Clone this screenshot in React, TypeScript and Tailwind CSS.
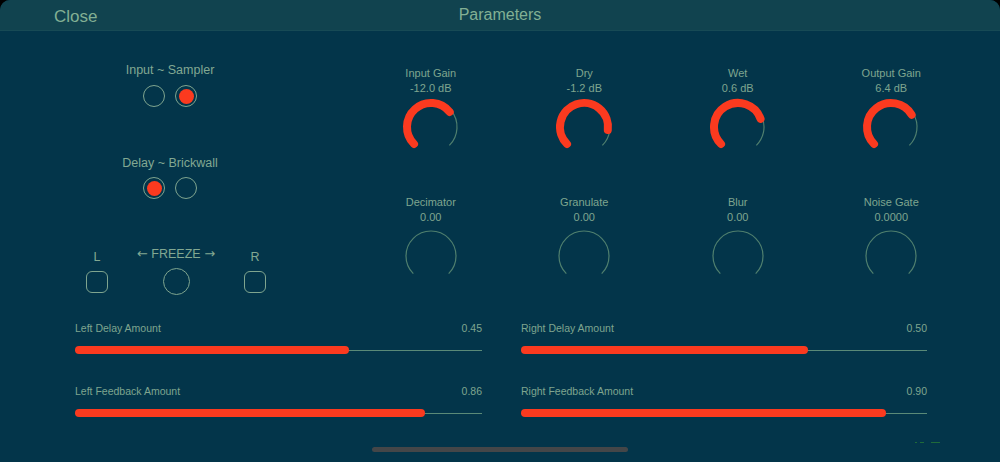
const RED = "#fb3a1f";

function arcPath(cx: number, cy: number, r: number, from: number, to: number) {
  const rad = (d: number) => (d * Math.PI) / 180;
  const x1 = cx + r * Math.sin(rad(from));
  const y1 = cy - r * Math.cos(rad(from));
  const x2 = cx + r * Math.sin(rad(to));
  const y2 = cy - r * Math.cos(rad(to));
  const large = to - from > 180 ? 1 : 0;
  return `M ${x1} ${y1} A ${r} ${r} 0 ${large} 1 ${x2} ${y2}`;
}

function Knob({ label, value, amount }: { label: string; value: string; amount?: number }) {
  const end = amount !== undefined ? -135 + 270 * amount : -135;
  return (
    <div className="flex flex-col items-center">
      <div className="text-[11px] leading-[13px] text-[#7fa58f]">{label}</div>
      <div className="mt-[2px] text-[11px] leading-[13px] text-[#7fa58f]">{value}</div>
      <svg width="60" height="60" viewBox="0 0 60 60" className="mt-[2px]">
        {amount !== undefined ? (
          <>
            <path d={arcPath(30, 30, 26, end, 135)} fill="none" stroke="#4f7f6e" strokeWidth="1.2" />
            <path d={arcPath(30, 30, 24, -135, end)} fill="none" stroke={RED} strokeWidth="8" strokeLinecap="round" />
          </>
        ) : (
          <path d={arcPath(30, 30, 25, -135, 135)} fill="none" stroke="#4f7f6e" strokeWidth="1.2" />
        )}
      </svg>
    </div>
  );
}

function Radio({ on }: { on?: boolean }) {
  return (
    <div className="w-[22px] h-[22px] rounded-full border-[1.5px] border-[#7fa58f] flex items-center justify-center">
      {on && <div className="w-[15px] h-[15px] rounded-full bg-[#fb3a1f]" />}
    </div>
  );
}

function Slider({ label, value, amount }: { label: string; value: string; amount: number }) {
  return (
    <div className="flex flex-col">
      <div className="flex justify-between text-[10.5px] leading-[13px] text-[#7fa58f]">
        <span>{label}</span>
        <span>{value}</span>
      </div>
      <div className="relative mt-[11px] h-[8px] flex items-center">
        <div className="w-full h-px bg-[#5a8a78]" />
        <div className="absolute left-0 top-0 h-[8px] rounded-full bg-[#fb3a1f]" style={{ width: `${amount * 100}%` }} />
      </div>
    </div>
  );
}

export default function App() {
  return (
    <div
      className="w-[1000px] h-[462px] bg-black overflow-hidden"
      style={{ fontFamily: '"Liberation Sans", Arial, sans-serif' }}
    >
      <div className="w-full h-full bg-[#03354a] rounded-tl-[10px] rounded-tr-[10px] overflow-hidden flex flex-col">
        {/* Header */}
        <div className="h-[31px] bg-[#11434f] border-b border-[#174a55] grid grid-cols-[1fr_auto_1fr] items-center">
          <div className="pl-[54px] text-[17px] text-[#82b094] pt-[3px]">Close</div>
          <div className="text-[16px] text-[#82b094]">Parameters</div>
          <div />
        </div>

        {/* Top area */}
        <div className="flex h-[277px]">
          {/* Left panel */}
          <div className="w-[340px] flex flex-col items-center pt-[31px]">
            <div className="text-[12.5px] leading-[16px] text-[#82a892]">Input ~ Sampler</div>
            <div className="flex gap-[10px] mt-[7px]">
              <Radio />
              <Radio on />
            </div>
            <div className="text-[12.5px] leading-[16px] text-[#82a892] mt-[48px]">Delay ~ Brickwall</div>
            <div className="flex gap-[10px] mt-[6px]">
              <Radio on />
              <Radio />
            </div>
            <div className="flex items-end mt-[47px] ml-[12px]">
              <div className="flex flex-col items-center w-[22px]">
                <div className="text-[12.5px] leading-[16px] text-[#82a892]">L</div>
                <div className="mt-[6px] w-[22px] h-[22px] rounded-[6px] border-[1.5px] border-[#7fa58f]" />
              </div>
              <div className="flex flex-col items-center w-[80px] mx-[28px]">
                <div className="text-[12.5px] leading-[16px] text-[#82a892] whitespace-nowrap">
                  <span className="font-['DejaVu_Sans'] text-[13px]">←</span> FREEZE{" "}
                  <span className="font-['DejaVu_Sans'] text-[13px]">→</span>
                </div>
                <div className="mt-[6px] w-[27px] h-[27px] rounded-full border-[1.5px] border-[#7fa58f] mb-[-2px]" />
              </div>
              <div className="flex flex-col items-center w-[22px]">
                <div className="text-[12.5px] leading-[16px] text-[#82a892]">R</div>
                <div className="mt-[6px] w-[22px] h-[22px] rounded-[6px] border-[1.5px] border-[#7fa58f]" />
              </div>
            </div>
          </div>

          {/* Knobs */}
          <div className="ml-[14px] w-[614px] grid grid-cols-4 pt-[36px] gap-y-[39px] content-start">
            <Knob label="Input Gain" value="-12.0 dB" amount={0.69} />
            <Knob label="Dry" value="-1.2 dB" amount={0.86} />
            <Knob label="Wet" value="0.6 dB" amount={0.76} />
            <Knob label="Output Gain" value="6.4 dB" amount={0.72} />
            <Knob label="Decimator" value="0.00" />
            <Knob label="Granulate" value="0.00" />
            <Knob label="Blur" value="0.00" />
            <Knob label="Noise Gate" value="0.0000" />
          </div>
        </div>

        {/* Sliders */}
        <div className="grid grid-cols-[407px_406px] gap-x-[39px] pl-[75px] gap-y-[31px] pt-[14px]">
          <Slider label="Left Delay Amount" value="0.45" amount={0.673} />
          <Slider label="Right Delay Amount" value="0.50" amount={0.707} />
          <Slider label="Left Feedback Amount" value="0.86" amount={0.86} />
          <Slider label="Right Feedback Amount" value="0.90" amount={0.9} />
        </div>

        <div className="flex-1 relative">
          <div className="absolute right-[60px] top-[25px] flex gap-[3px] items-center">
            <div className="w-[2px] h-[1px] bg-[#1f6a3a]" />
            <div className="w-[4px] h-[1px] bg-[#1f6a3a]" />
            <div className="w-[9px] h-[1px] bg-[#1f6a3a] ml-[4px]" />
          </div>
        </div>

        {/* Home indicator */}
        <div className="h-[15px] flex justify-center">
          <div className="w-[256px] h-[5px] rounded-full bg-[#444648]" />
        </div>
      </div>
    </div>
  );
}
